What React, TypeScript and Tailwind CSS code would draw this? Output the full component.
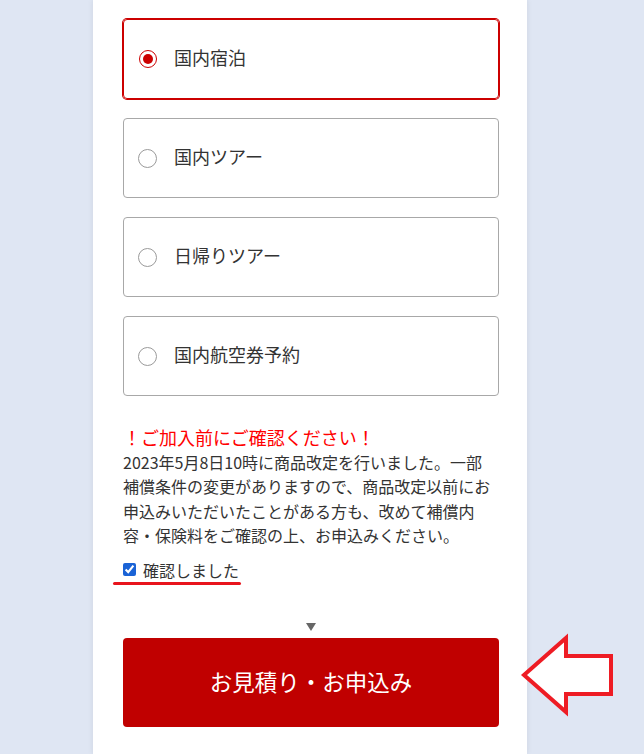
import React from "react";

const font = { fontFamily: '"Noto Sans CJK JP", "Noto Sans", sans-serif' };

function Radio({ checked }: { checked: boolean }) {
  if (checked) {
    return (
      <span className="flex h-[18px] w-[18px] shrink-0 items-center justify-center rounded-full border-[1.5px] border-[#cc0000] bg-white">
        <span className="h-[10px] w-[10px] rounded-full bg-[#cc0000]" />
      </span>
    );
  }
  return <span className="h-[19px] w-[19px] shrink-0 rounded-full border border-[#9a9a9a] bg-white" />;
}

function Card({ label, checked }: { label: string; checked?: boolean }) {
  return (
    <div
      className={
        checked
          ? "flex h-[80px] items-center rounded-[4px] border border-[#cc0000] pl-[15px] shadow-[0_0_0_1px_#cc0000]"
          : "flex h-[80px] items-center rounded-[4px] border border-[#a8a8a8] pl-[14px]"
      }
    >
      <Radio checked={!!checked} />
      <span className="mb-[4px] ml-[17px] text-[18px] leading-none text-[#333]">{label}</span>
    </div>
  );
}

export default function App() {
  return (
    <div className="relative min-h-[754px] overflow-hidden bg-[#dfe6f3]" style={font}>
      <div className="ml-[93px] min-h-[754px] w-[434px] bg-white pl-[30px] pr-[28px] pt-[19px] shadow-[0_0_6px_rgba(0,0,0,0.08)]">
        <div className="flex flex-col gap-[19px]">
          <Card label="国内宿泊" checked />
          <Card label="国内ツアー" />
          <Card label="日帰りツアー" />
          <Card label="国内航空券予約" />
        </div>

        <div className="mt-[28px] text-[18px] leading-[26px] text-[#ff0000]">！ご加入前にご確認ください！</div>
        <div className="text-[16px] leading-[24.4px] text-[#333]">
          2023年5月8日10時に商品改定を行いました。一部
          <br />
          補償条件の変更がありますので、商品改定以前にお
          <br />
          申込みいただいたことがある方も、改めて補償内
          <br />
          容・保険料をご確認の上、お申込みください。
        </div>

        <div className="relative mt-[10px] flex h-[24px] items-center">
          <input
            type="checkbox"
            defaultChecked
            className="m-0 h-[13px] w-[13px] accent-[#1a63d6]"
          />
          <span className="ml-[7px] text-[16px] leading-none text-[#333]">確認しました</span>
          <span className="absolute left-[-10px] top-[24px] h-[3px] w-[128px] rounded-full bg-[#e8141c]" />
        </div>

        <div className="mt-[41px] flex justify-center">
          <span className="h-0 w-0 border-x-[5px] border-t-[8px] border-x-transparent border-t-[#666]" />
        </div>

        <button className="mt-[7px] flex h-[89px] w-full items-center justify-center rounded-[4px] bg-[#c00000] text-[22.5px] text-white">
          お見積り・お申込み
        </button>
      </div>

      <svg className="absolute left-[515px] top-[630px]" width="104" height="92" viewBox="515 630 104 92">
        <polygon
          points="524,675 566,638 566,656 611,656 611,694 566,694 566,712"
          fill="#ffffff"
          stroke="#ee1c24"
          strokeWidth="4"
          strokeLinejoin="miter"
        />
      </svg>
    </div>
  );
}
